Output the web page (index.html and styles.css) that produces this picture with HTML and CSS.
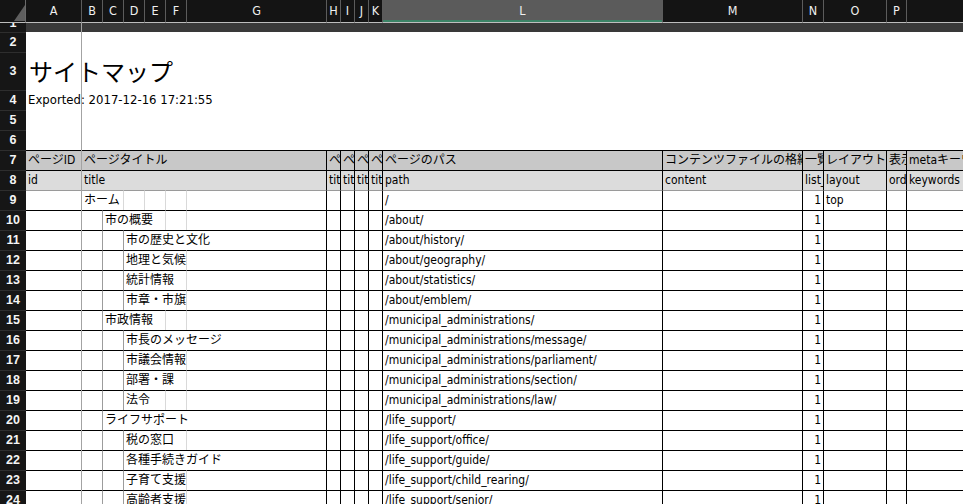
FILE: index.html
```html
<!DOCTYPE html>
<html lang="ja">
<head>
<meta charset="utf-8">
<title>サイトマップ</title>
<link rel="stylesheet" href="styles.css">
</head>
<body>
<div class="sheet">
  <div class="row colhdr">
    <div class="h corner"><svg width="26" height="22" viewBox="0 0 26 22"><polygon points="25,5 25,21 14,21" fill="#5f5f5f"/></svg></div>
    <div class="h">A</div><div class="h">B</div><div class="h">C</div><div class="h">D</div><div class="h">E</div><div class="h">F</div><div class="h">G</div>
    <div class="h">H</div><div class="h">I</div><div class="h">J</div><div class="h">K</div>
    <div class="h sel">L</div><div class="h">M</div><div class="h">N</div><div class="h">O</div><div class="h">P</div><div class="h last"></div>
  </div>
  <div class="row band">
    <div class="rh rh1"><span>1</span></div>
    <div class="bc"></div>
  </div>
  <div class="row"><div class="rh">2</div></div>
  <div class="row r3"><div class="rh">3</div><div class="c title">サイトマップ</div></div>
  <div class="row"><div class="rh">4</div><div class="c wide exp">Exported: 2017-12-16 17:21:55</div></div>
  <div class="row"><div class="rh">5</div></div>
  <div class="row"><div class="rh">6</div></div>

  <div class="row d hd1">
    <div class="rh">7</div>
    <div class="c gy">ページID</div>
    <div class="c bk s6">ページタイトル</div>
    <div class="c bk">ページ</div><div class="c bk">ページ</div><div class="c bk">ページ</div><div class="c bk">ページ</div>
    <div class="c bk">ページのパス</div>
    <div class="c bk">コンテンツファイルの格納</div>
    <div class="c bk">一覧</div>
    <div class="c bk">レイアウト</div>
    <div class="c bk">表示順</div>
    <div class="c">metaキーワード</div>
  </div>
  <div class="row d hd2">
    <div class="rh">8</div>
    <div class="c gy">id</div>
    <div class="c bk s6">title</div>
    <div class="c bk">title</div><div class="c bk">title</div><div class="c bk">title</div><div class="c bk">title</div>
    <div class="c bk">path</div>
    <div class="c bk">content</div>
    <div class="c bk">list_show</div>
    <div class="c bk">layout</div>
    <div class="c bk">order</div>
    <div class="c">keywords</div>
  </div>

  <div class="row d first">
    <div class="rh">9</div>
    <div class="c gy"></div>
    <div class="c lt s2 t">ホーム</div><div class="c lt"></div><div class="c lt"></div><div class="c lt"></div><div class="c bk"></div>
    <div class="c bk"></div><div class="c bk"></div><div class="c bk"></div><div class="c bk"></div>
    <div class="c bk">/</div><div class="c bk"></div><div class="c bk num">1</div><div class="c bk">top</div><div class="c bk"></div><div class="c"></div>
  </div>
  <div class="row d">
    <div class="rh">10</div>
    <div class="c gy"></div>
    <div class="c md"></div><div class="c lt s3 t">市の概要</div><div class="c lt"></div><div class="c bk"></div>
    <div class="c bk"></div><div class="c bk"></div><div class="c bk"></div><div class="c bk"></div>
    <div class="c bk">/about/</div><div class="c bk"></div><div class="c bk num">1</div><div class="c bk"></div><div class="c bk"></div><div class="c"></div>
  </div>
  <div class="row d">
    <div class="rh">11</div>
    <div class="c gy"></div>
    <div class="c md"></div><div class="c md"></div><div class="c bk s4 t">市の歴史と文化</div>
    <div class="c bk"></div><div class="c bk"></div><div class="c bk"></div><div class="c bk"></div>
    <div class="c bk">/about/history/</div><div class="c bk"></div><div class="c bk num">1</div><div class="c bk"></div><div class="c bk"></div><div class="c"></div>
  </div>
  <div class="row d">
    <div class="rh">12</div>
    <div class="c gy"></div>
    <div class="c md"></div><div class="c md"></div><div class="c lt s3 t">地理と気候</div><div class="c bk"></div>
    <div class="c bk"></div><div class="c bk"></div><div class="c bk"></div><div class="c bk"></div>
    <div class="c bk">/about/geography/</div><div class="c bk"></div><div class="c bk num">1</div><div class="c bk"></div><div class="c bk"></div><div class="c"></div>
  </div>
  <div class="row d">
    <div class="rh">13</div>
    <div class="c gy"></div>
    <div class="c md"></div><div class="c md"></div><div class="c lt s3 t">統計情報</div><div class="c bk"></div>
    <div class="c bk"></div><div class="c bk"></div><div class="c bk"></div><div class="c bk"></div>
    <div class="c bk">/about/statistics/</div><div class="c bk"></div><div class="c bk num">1</div><div class="c bk"></div><div class="c bk"></div><div class="c"></div>
  </div>
  <div class="row d">
    <div class="rh">14</div>
    <div class="c gy"></div>
    <div class="c md"></div><div class="c md"></div><div class="c lt s3 t">市章・市旗</div><div class="c bk"></div>
    <div class="c bk"></div><div class="c bk"></div><div class="c bk"></div><div class="c bk"></div>
    <div class="c bk">/about/emblem/</div><div class="c bk"></div><div class="c bk num">1</div><div class="c bk"></div><div class="c bk"></div><div class="c"></div>
  </div>
  <div class="row d">
    <div class="rh">15</div>
    <div class="c gy"></div>
    <div class="c md"></div><div class="c lt s3 t">市政情報</div><div class="c lt"></div><div class="c bk"></div>
    <div class="c bk"></div><div class="c bk"></div><div class="c bk"></div><div class="c bk"></div>
    <div class="c bk">/municipal_administrations/</div><div class="c bk"></div><div class="c bk num">1</div><div class="c bk"></div><div class="c bk"></div><div class="c"></div>
  </div>
  <div class="row d">
    <div class="rh">16</div>
    <div class="c gy"></div>
    <div class="c md"></div><div class="c md"></div><div class="c bk s4 t">市長のメッセージ</div>
    <div class="c bk"></div><div class="c bk"></div><div class="c bk"></div><div class="c bk"></div>
    <div class="c bk">/municipal_administrations/message/</div><div class="c bk"></div><div class="c bk num">1</div><div class="c bk"></div><div class="c bk"></div><div class="c"></div>
  </div>
  <div class="row d">
    <div class="rh">17</div>
    <div class="c gy"></div>
    <div class="c md"></div><div class="c md"></div><div class="c lt s3 t">市議会情報</div><div class="c bk"></div>
    <div class="c bk"></div><div class="c bk"></div><div class="c bk"></div><div class="c bk"></div>
    <div class="c bk">/municipal_administrations/parliament/</div><div class="c bk"></div><div class="c bk num">1</div><div class="c bk"></div><div class="c bk"></div><div class="c"></div>
  </div>
  <div class="row d">
    <div class="rh">18</div>
    <div class="c gy"></div>
    <div class="c md"></div><div class="c md"></div><div class="c lt s3 t">部署・課</div><div class="c bk"></div>
    <div class="c bk"></div><div class="c bk"></div><div class="c bk"></div><div class="c bk"></div>
    <div class="c bk">/municipal_administrations/section/</div><div class="c bk"></div><div class="c bk num">1</div><div class="c bk"></div><div class="c bk"></div><div class="c"></div>
  </div>
  <div class="row d">
    <div class="rh">19</div>
    <div class="c gy"></div>
    <div class="c md"></div><div class="c md"></div><div class="c lt s2 t">法令</div><div class="c lt"></div><div class="c bk"></div>
    <div class="c bk"></div><div class="c bk"></div><div class="c bk"></div><div class="c bk"></div>
    <div class="c bk">/municipal_administrations/law/</div><div class="c bk"></div><div class="c bk num">1</div><div class="c bk"></div><div class="c bk"></div><div class="c"></div>
  </div>
  <div class="row d">
    <div class="rh">20</div>
    <div class="c gy"></div>
    <div class="c md"></div><div class="c bk s5 t">ライフサポート</div>
    <div class="c bk"></div><div class="c bk"></div><div class="c bk"></div><div class="c bk"></div>
    <div class="c bk">/life_support/</div><div class="c bk"></div><div class="c bk num">1</div><div class="c bk"></div><div class="c bk"></div><div class="c"></div>
  </div>
  <div class="row d">
    <div class="rh">21</div>
    <div class="c gy"></div>
    <div class="c md"></div><div class="c md"></div><div class="c lt s3 t">税の窓口</div><div class="c bk"></div>
    <div class="c bk"></div><div class="c bk"></div><div class="c bk"></div><div class="c bk"></div>
    <div class="c bk">/life_support/office/</div><div class="c bk"></div><div class="c bk num">1</div><div class="c bk"></div><div class="c bk"></div><div class="c"></div>
  </div>
  <div class="row d">
    <div class="rh">22</div>
    <div class="c gy"></div>
    <div class="c md"></div><div class="c md"></div><div class="c bk s4 t">各種手続きガイド</div>
    <div class="c bk"></div><div class="c bk"></div><div class="c bk"></div><div class="c bk"></div>
    <div class="c bk">/life_support/guide/</div><div class="c bk"></div><div class="c bk num">1</div><div class="c bk"></div><div class="c bk"></div><div class="c"></div>
  </div>
  <div class="row d">
    <div class="rh">23</div>
    <div class="c gy"></div>
    <div class="c md"></div><div class="c md"></div><div class="c lt s3 t">子育て支援</div><div class="c bk"></div>
    <div class="c bk"></div><div class="c bk"></div><div class="c bk"></div><div class="c bk"></div>
    <div class="c bk">/life_support/child_rearing/</div><div class="c bk"></div><div class="c bk num">1</div><div class="c bk"></div><div class="c bk"></div><div class="c"></div>
  </div>
  <div class="row d">
    <div class="rh">24</div>
    <div class="c gy"></div>
    <div class="c md"></div><div class="c md"></div><div class="c lt s3 t">高齢者支援</div><div class="c bk"></div>
    <div class="c bk"></div><div class="c bk"></div><div class="c bk"></div><div class="c bk"></div>
    <div class="c bk">/life_support/senior/</div><div class="c bk"></div><div class="c bk num">1</div><div class="c bk"></div><div class="c bk"></div><div class="c"></div>
  </div>

  <div class="freeze"></div>
</div>
</body>
</html>
```

FILE: styles.css
```css
html, body {
  margin: 0;
  padding: 0;
}
body {
  width: 963px;
  height: 504px;
  overflow: hidden;
  background: #ffffff;
  color: #000000;
  font-family: "DejaVu Sans Condensed", "Liberation Sans", "Noto Sans CJK JP", sans-serif;
  font-size: 12px;
}
.sheet {
  position: relative;
  width: 1057px;
}
.row {
  display: grid;
  grid-template-columns: 26px 56px 21px 21px 21px 21px 21px 140px 14px 14px 14px 14px 280px 140px 21px 63px 20px 150px;
  height: 20px;
}

/* column header */
.colhdr {
  height: 23px;
  background: #141414;
}
.h {
  box-sizing: border-box;
  height: 23px;
  border-right: 1px solid #5c5c5c;
  border-bottom: 1px solid #bdbdbd;
  color: #f0f0f0;
  font-family: "DejaVu Sans Condensed", "Liberation Sans", sans-serif;
  font-size: 12.5px;
  line-height: 22px;
  text-align: center;
  overflow: hidden;
}
.h.corner {
  border-right-color: #6a6a6a;
}
.h.corner svg {
  display: block;
}
.h.sel {
  background: #5b5b5b;
  box-shadow: inset 0 -2px 0 #3b8366;
}
.h.last {
  border-right: none;
}

/* partially hidden row 1 */
.band {
  height: 9px;
  background: #393939;
}
.bc {
  grid-column: 2 / -1;
}
.rh1 {
  height: 9px;
  border-top: none !important;
  overflow: hidden;
}
.rh1 span {
  display: block;
  margin-top: -10px;
  line-height: 20px;
}

/* row headers */
.rh {
  box-sizing: border-box;
  background: #161616;
  border-top: 1px solid #2e2e2e;
  color: #f4f4f4;
  font-family: "Liberation Sans", sans-serif;
  font-weight: bold;
  font-size: 12.5px;
  line-height: 19px;
  text-align: center;
}
.r3 {
  height: 38px;
}
.r3 .rh {
  line-height: 37px;
}

/* cells */
.c {
  box-sizing: border-box;
  padding: 0 2px;
  white-space: nowrap;
  overflow: hidden;
  line-height: 19px;
}
.title {
  grid-column: 2 / -1;
  font-family: "Noto Sans CJK JP", sans-serif;
  font-size: 24px;
  line-height: 38px;
  padding-left: 3px;
  overflow: visible;
}
.wide {
  grid-column: 2 / -1;
  line-height: 20px;
}
.exp {
  font-size: 13px;
}
.d .c {
  border-top: 1px solid #000000;
}
.first .c {
  border-top-color: #9a9a9a;
}
.hd1 .c {
  background: #c8c8c8;
}
.hd2 .c {
  background: #dcdcdc;
}
.bk {
  border-right: 1px solid #000000;
}
.md {
  border-right: 1px solid #9c9c9c;
}
.lt {
  border-right: 1px solid #d9d9d9;
}
.gy {
  border-right: 1px solid #a3a3a3;
}
.t {
  overflow: visible;
}
.num {
  text-align: right;
}
.s2 { grid-column: span 2; }
.s3 { grid-column: span 3; }
.s4 { grid-column: span 4; }
.s5 { grid-column: span 5; }
.s6 { grid-column: span 6; }

/* frozen pane divider over the sheet */
.freeze {
  position: absolute;
  left: 81px;
  top: 23px;
  bottom: 0;
  width: 1px;
  background: #a3a3a3;
}
```
